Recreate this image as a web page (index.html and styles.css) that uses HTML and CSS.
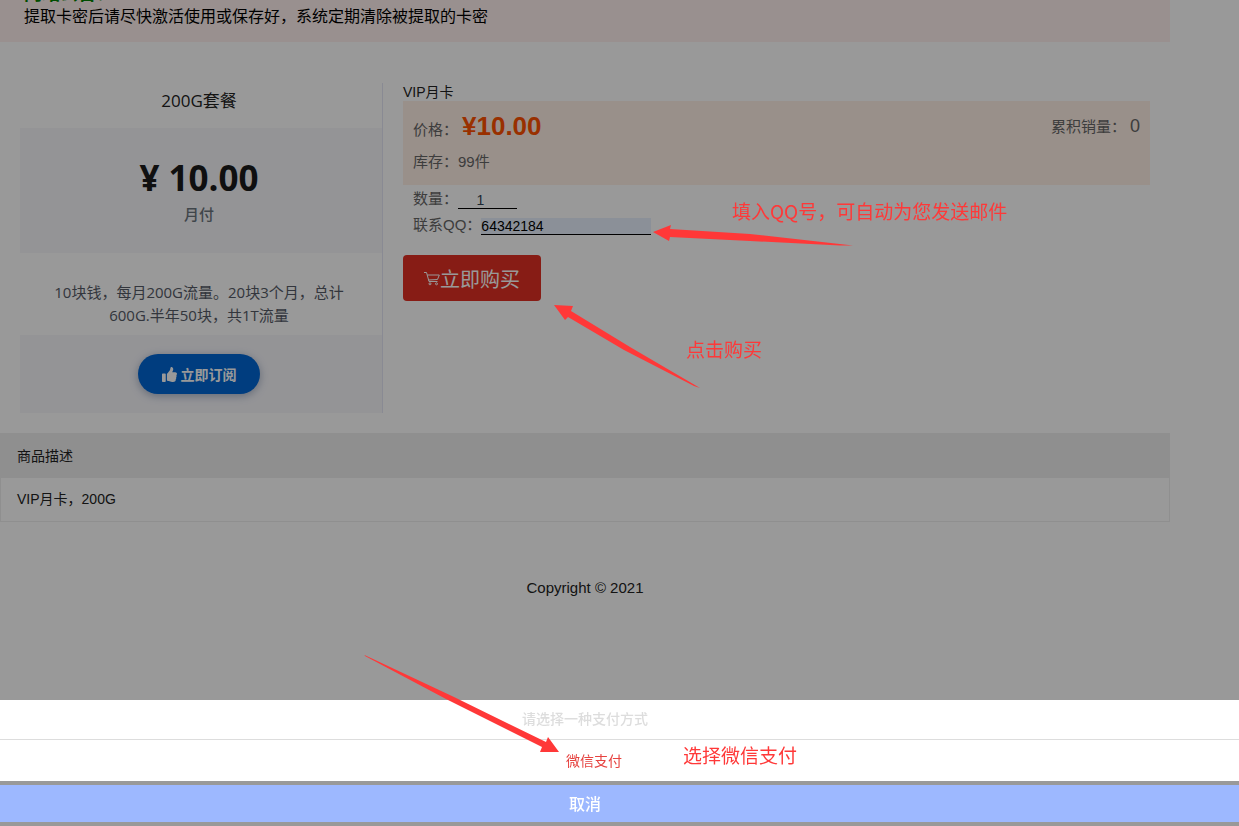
FILE: index.html
```html
<!DOCTYPE html>
<html lang="zh-CN">
<head>
<meta charset="utf-8">
<title>VIP月卡</title>
<link rel="stylesheet" href="styles.css">
</head>
<body>
<main class="container">
  <section class="notice">
    <h2 class="notice-title">网站公告：</h2>
    <p class="notice-text">提取卡密后请尽快激活使用或保存好，系统定期清除被提取的卡密</p>
  </section>

  <div class="product">
    <article class="plan">
      <h3 class="plan-name">200G套餐</h3>
      <div class="plan-price">
        <strong class="plan-amount">¥ 10.00</strong>
        <span class="plan-period">月付</span>
      </div>
      <p class="plan-desc">10块钱，每月200G流量。20块3个月，总计<br>600G.半年50块，共1T流量</p>
      <div class="plan-foot">
        <button class="subscribe" type="button">
          <svg class="thumb" viewBox="0 0 512 512" aria-hidden="true"><path d="M104 224H24c-13 0-24 11-24 24v240c0 13 11 24 24 24h80c13 0 24-11 24-24V248c0-13-11-24-24-24zM384 81c0 43-26 66-33 95h101c33 0 60 28 60 58 0 18-8 37-20 49 9 23 8 56-10 79 9 26 0 57-17 74 4 18 2 33-6 44-20 29-69 32-110 32h-3c-47 0-85-17-115-31-16-7-36-15-51-15-6-1-12-6-12-13V240c0-3 1-6 4-8 38-38 54-77 85-108 14-14 19-35 24-56C285 51 294 0 312 0c24 0 72 8 72 81z"/></svg>
          <span>立即订阅</span>
        </button>
      </div>
    </article>

    <form class="order">
      <h1 class="order-title">VIP月卡</h1>
      <div class="price-box">
        <div class="price-row">
          <p class="price-line"><span>价格：</span><strong class="price">¥10.00</strong></p>
          <p class="sales"><span>累积销量：</span><span class="sales-count">0</span></p>
        </div>
        <p class="stock">库存：99件</p>
      </div>
      <div class="field">
        <label for="qty">数量：</label>
        <input class="qty" id="qty" type="text" value="1">
      </div>
      <div class="field">
        <label for="qq">联系QQ：</label>
        <input class="qq" id="qq" type="text" value="64342184">
      </div>
      <button class="buy" type="button">
        <svg class="cart" viewBox="0 0 16 16" aria-hidden="true"><path d="M0 2.500h2.500l2.500 9h8.500M3.300 5h12l-1.800 4.500-9 .5"/><circle cx="6" cy="13.800" r="1"/><circle cx="12.500" cy="13.800" r="1"/></svg>
        <span>立即购买</span>
      </button>
    </form>
  </div>

  <section class="detail">
    <h2 class="detail-head">商品描述</h2>
    <p class="detail-body">VIP月卡，200G</p>
  </section>

  <footer class="footer">Copyright © 2021</footer>
</main>

<div class="mask"></div>

<div class="sheet" role="dialog" aria-label="支付方式">
  <div class="sheet-list">
    <p class="sheet-title"><span class="sheet-inner">请选择一种支付方式</span></p>
    <button class="sheet-option" type="button"><span class="sheet-inner option-inner">微信支付</span></button>
  </div>
  <button class="sheet-cancel" type="button"><span class="sheet-inner">取消</span></button>
</div>

<div class="notes">
  <svg class="arrows" width="1239" height="826" viewBox="0 0 1239 826" aria-hidden="true">
    <path d="M653 232L671 225L670 229L750 234L853 245.500L840 245.500L750 241L670 237L669 241Z"/>
    <path d="M554 305L573 306L571 311L630 347L700 388L694 386L624 350L568 317L565 320Z"/>
    <path d="M364.500 655L454 697L546 742L548 737L559 752L540 752L542 747L446 699L365 656Z"/>
  </svg>
  <span class="note note-qq">填入QQ号，可自动为您发送邮件</span>
  <span class="note note-buy">点击购买</span>
  <span class="note note-pay">选择微信支付</span>
</div>
</body>
</html>
```
FILE: styles.css
```css
* {
  box-sizing: border-box;
}

body {
  margin: 0;
  background: #fff;
  color: #222;
  font-family: "Liberation Sans", "Noto Sans CJK SC", sans-serif;
  font-size: 14px;
  font-weight: 400;
  overflow: hidden;
}

h1, h2, h3, p {
  margin: 0;
  font-size: inherit;
  font-weight: inherit;
}

button, input {
  border: 0;
  padding: 0;
  font-family: inherit;
}

.container {
  max-width: 1170px;
}

/* Notice: the page is scrolled, its heading is partly out of view */
.notice {
  margin-top: -18px;
  padding: 0 24px 14px;
  background: #fff0ee;
}

.notice-title {
  color: #008000;
  font-size: 18px;
  font-weight: 700;
  line-height: 24px;
}

.notice-text {
  color: #000;
  font-size: 16px;
  line-height: 22px;
}

.product {
  display: flex;
  gap: 20px;
  padding: 41px 20px 20px;
}

/* Plan card */
.plan {
  flex: 0 0 363px;
  border-right: 1px solid #e4e7f5;
  font-family: "Open Sans", "Noto Sans CJK SC", sans-serif;
  text-align: center;
}

.plan-name {
  padding: 6px 4px 15px 0;
  font-size: 17px;
  line-height: 24px;
}

.plan-price {
  display: flex;
  flex-direction: column;
  padding: 26px 4px 27px 0;
  background: #f7f7fb;
}

.plan-amount {
  color: #1b1b1b;
  font-size: 35px;
  line-height: 48px;
}

.plan-period {
  color: #6c757d;
  font-size: 15px;
  font-weight: 500;
  line-height: 24px;
}

.plan-desc {
  padding: 28px 4px 8px 0;
  color: #555a66;
  font-size: 15px;
  line-height: 23px;
}

.plan-foot {
  display: flex;
  justify-content: center;
  padding: 19px 4px 19px 0;
  background: #f7f7fb;
}

.subscribe {
  display: flex;
  align-items: center;
  justify-content: center;
  gap: 4px;
  width: 122px;
  height: 40px;
  border-radius: 20px;
  background: #0066d4;
  box-shadow: 0 2px 8px rgba(40, 70, 120, 0.4);
  color: #fff;
  font-size: 14px;
  font-weight: 700;
}

.thumb {
  width: 15px;
  height: 15px;
  fill: #fff;
}

/* Order form */
.order {
  flex: 1;
  color: #666;
  font-size: 15px;
}

.order-title {
  color: #222;
  font-size: 14px;
  line-height: 18px;
}

.price-box {
  height: 84px;
  padding: 8px 10px;
  background: #fff0e6;
}

.price-row {
  display: flex;
  justify-content: space-between;
  line-height: 34px;
}

.price-line, .sales {
  display: flex;
  align-items: baseline;
  gap: 4px;
}

.price {
  color: #ff5000;
  font-size: 26px;
}

.sales-count {
  font-size: 18px;
}

.stock {
  line-height: 30px;
}

.field {
  display: flex;
  align-items: center;
  padding-left: 10px;
  height: 26px;
}

.field label {
  line-height: 20px;
  padding-bottom: 2px;
}

.price-box + .field {
  margin-top: 2px;
}

.field input {
  height: 17px;
  border-bottom: 1px solid #000;
  background: transparent;
  color: #000;
  font-size: 14px;
}

.field .qty {
  width: 59px;
  padding-right: 14px;
  color: #345;
  text-align: center;
}

.field .qq {
  width: 170px;
  background: #e8f0fe;
}

.buy {
  display: flex;
  align-items: center;
  justify-content: center;
  width: 138px;
  height: 46px;
  margin-top: 16px;
  border-radius: 4px;
  background: #e12f23;
  color: #fff;
  font-size: 20px;
}

.cart {
  width: 16px;
  height: 16px;
  fill: none;
  stroke: #fff;
  stroke-width: 1;
}

/* Description */
.detail {
  border: 1px solid #eee;
  line-height: 44px;
}

.detail-head {
  padding: 0 16px;
  background: #eee;
}

.detail-body {
  padding: 0 16px;
  line-height: 43px;
}

.footer {
  padding: 54px 0;
  font-size: 15px;
  line-height: 24px;
  text-align: center;
}

/* Payment sheet */
.mask {
  position: fixed;
  inset: 0;
  background: rgba(0, 0, 0, 0.4);
}

.sheet {
  position: fixed;
  right: 0;
  bottom: 0;
  left: 0;
  display: flex;
  flex-direction: column;
  gap: 4px;
  padding-bottom: 4px;
}

.sheet-list {
  display: flex;
  flex-direction: column;
  background: #fff;
}

.sheet-inner {
  display: block;
  max-width: 1170px;
  text-align: center;
}

.sheet-title {
  border-bottom: 1px solid #ddd;
  color: #ddd;
  font-weight: 500;
  line-height: 39px;
}

.sheet-option {
  height: 41px;
  padding-bottom: 2px;
  background: #fff;
  color: #e64340;
  font-size: 14px;
}

.option-inner {
  padding-left: 18px;
}

.sheet-cancel {
  height: 37px;
  padding-bottom: 2px;
  background: #9db8ff;
  color: #fff;
  font-size: 16px;
  font-weight: 500;
}

/* Guide marks drawn over the page */
.notes {
  position: absolute;
  top: 0;
  left: 0;
  color: #ff3838;
  font-family: "Noto Sans CJK SC", sans-serif;
  font-size: 19px;
  line-height: 28px;
  white-space: nowrap;
  pointer-events: none;
}

.arrows {
  display: block;
  fill: #ff3838;
}

.note {
  position: absolute;
}

.note-qq {
  top: 197px;
  left: 732px;
}

.note-buy {
  top: 335px;
  left: 686px;
}

.note-pay {
  top: 741px;
  left: 683px;
}
```
